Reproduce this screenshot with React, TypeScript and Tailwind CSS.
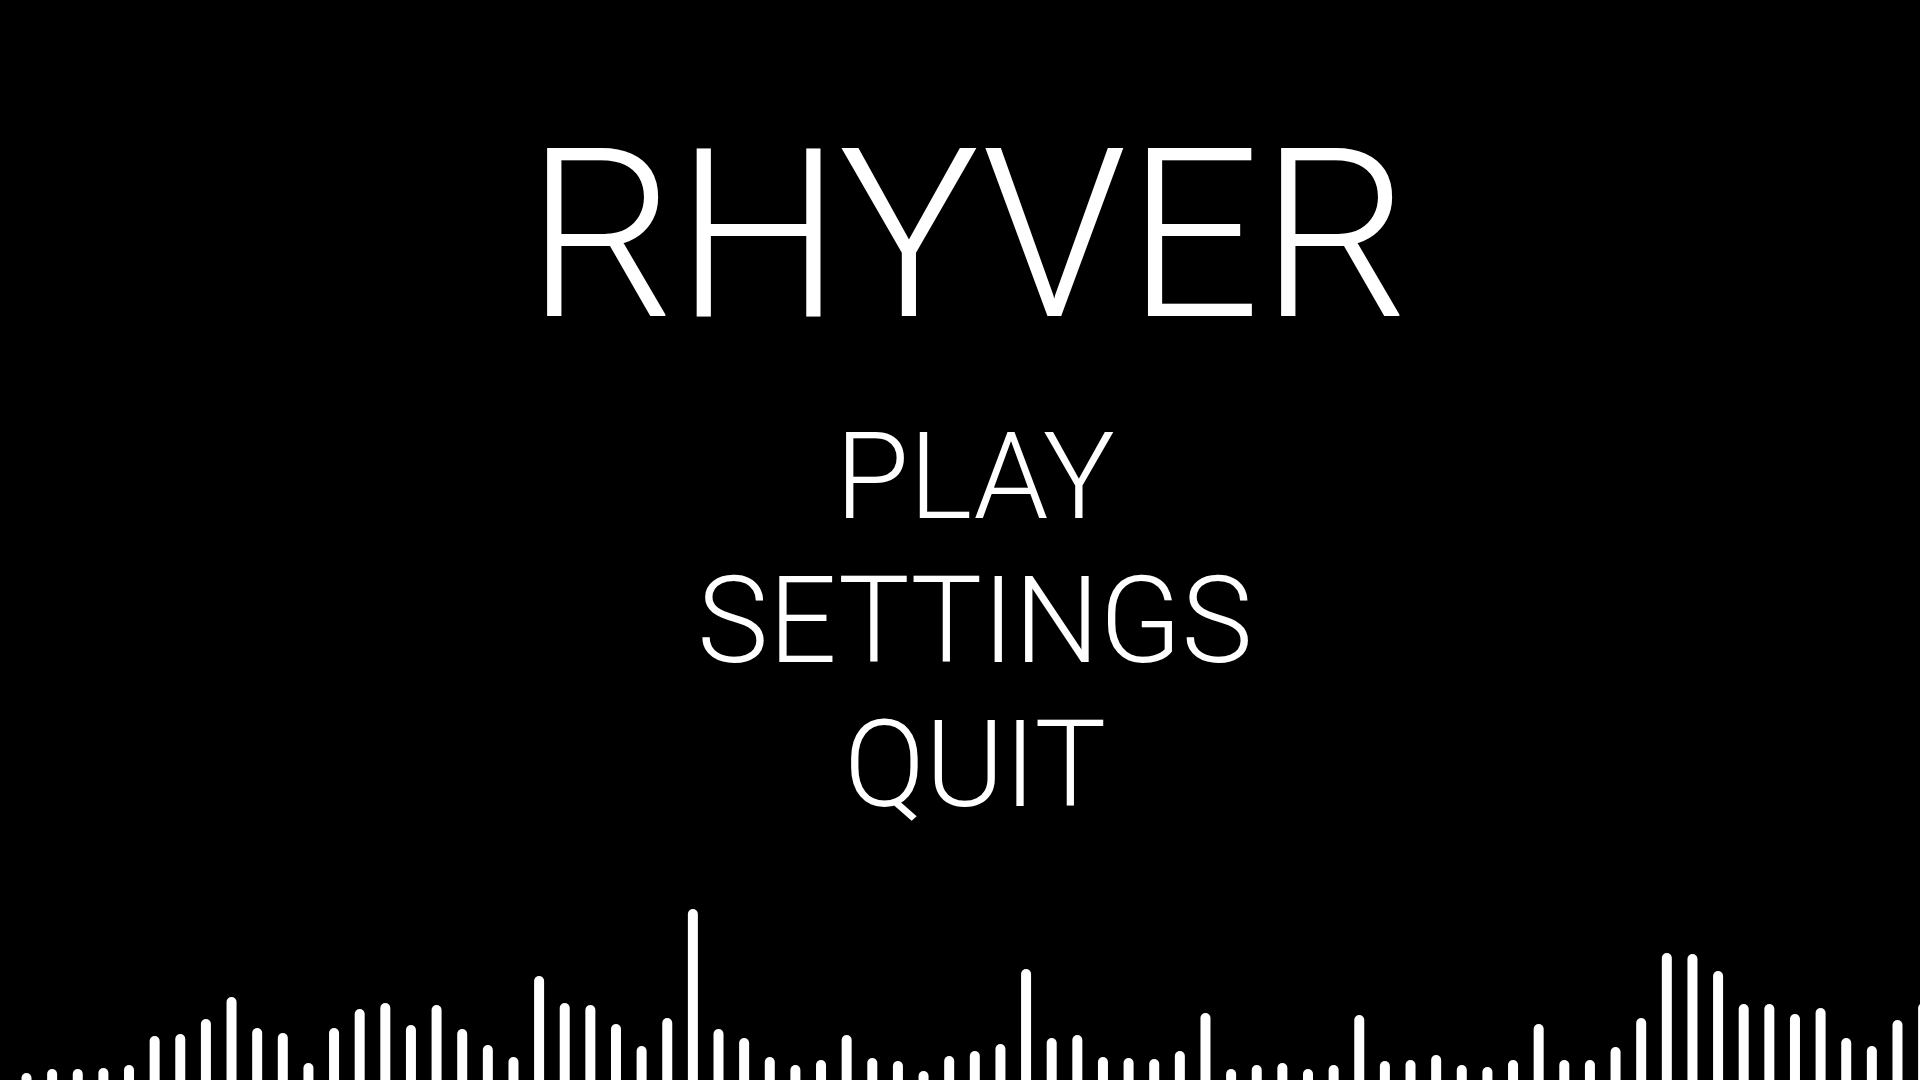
import React from 'react';

// top edge (y, in px) of each bar of the waveform, left to right
const barTops = [
  1073, 1069, 1069, 1068, 1065, 1036, 1034, 1019, 997, 1028, 1033, 1063, 1028, 1009, 1003, 1025, 1005, 1029,
  1045, 1057, 976, 1003, 1005, 1024, 1046, 1018, 909, 1029, 1038, 1057, 1065, 1060, 1035, 1058, 1061, 1071, 1056,
  1051, 1044, 969, 1038, 1035, 1057, 1058, 1059, 1051, 1013, 1069, 1065, 1063, 1069, 1065, 1015, 1061, 1060, 1055,
  1065, 1067, 1060, 1024, 1060, 1060, 1047, 1018, 953, 954, 971, 1004, 1004, 1014, 1008, 1038, 1046, 1020, 1003,
];

function Waveform() {
  return (
    <svg
      className="block w-full h-[180px] shrink-0 mt-auto"
      viewBox="0 900 1920 180"
      preserveAspectRatio="none"
    >
      {barTops.map((top, i) => {
        const cx = 26.5 + i * 25.63;
        return (
          <rect
            key={i}
            x={cx - 5}
            y={top}
            width={10}
            height={1090 - top}
            rx={5}
            fill="#ffffff"
          />
        );
      })}
    </svg>
  );
}

export default function App() {
  const items = ['PLAY', 'SETTINGS', 'QUIT'];

  return (
    <div className="h-screen w-full bg-black overflow-hidden flex flex-col items-center text-white font-['Roboto',_'Liberation_Sans',_sans-serif]">
      <h1 className="mt-[118px] pl-[16px] text-[235px] font-light leading-none">
        RHYVER
      </h1>

      <nav className="mt-[52px] pl-[30px] flex flex-col items-center text-[120px] leading-[144px] font-light">
        {items.map((item) => (
          <button key={item} className="cursor-pointer">
            {item}
          </button>
        ))}
      </nav>

      <Waveform />
    </div>
  );
}
